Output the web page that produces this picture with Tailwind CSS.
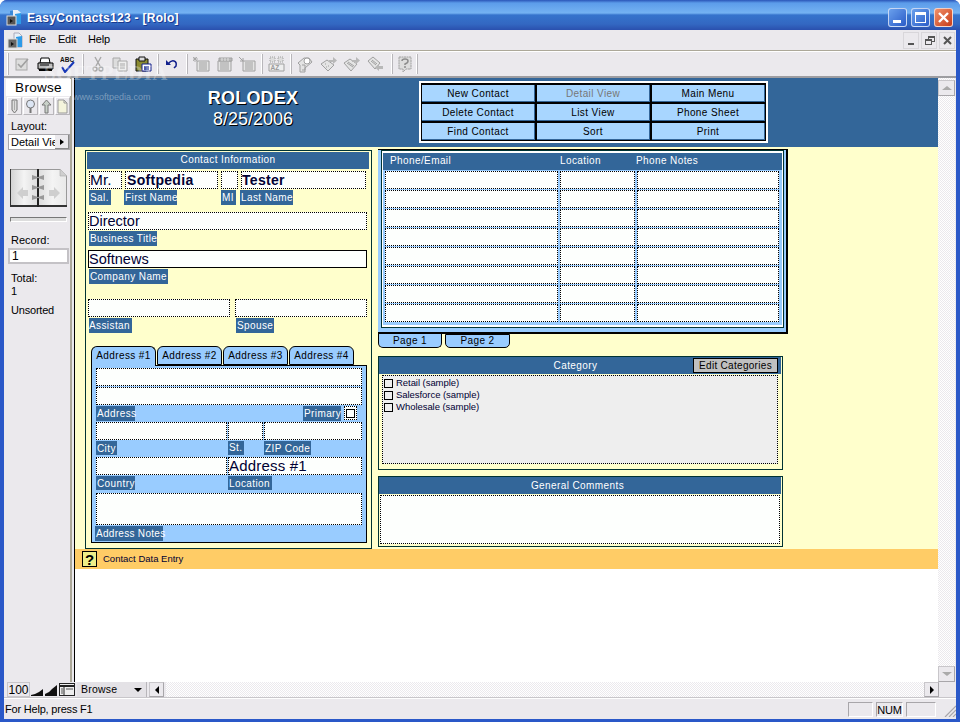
<!DOCTYPE html>
<html lang="en">
<head>
  <meta charset="UTF-8" />
  <title>EasyContacts123 - [Rolo]</title>
  <script src="https://cdn.jsdelivr.net/npm/@tailwindcss/browser@4"></script>
</head>
<body class="w-[960px] h-[722px] overflow-hidden bg-white font-['Liberation_Sans',Arial,sans-serif] text-black">

<div class="relative flex flex-col w-[960px] h-[722px] rounded-t-[7px] bg-[#2a58c8] overflow-hidden">

  <!-- Title bar -->
  <div class="flex items-center h-[30px] pt-[4px] pl-[6px] pr-[7px] bg-[linear-gradient(180deg,#2a55b8_0px,#5c9cea_3px,#74b2f2_13px,#3573cc_15px,#3368c2_24px,#2a50ae_30px)]">
    <svg class="w-[17px] h-[17px]" viewBox="0 0 17 17"><path d="M4 2l9-1v13l-9 1z" fill="#3a8ad8"/><path d="M7 1h5l3 3v11H7z" fill="#e8f0f8"/><path d="M9 5l6-1v11H9z" fill="#2c9ae8"/><rect x="1" y="7" width="9" height="9" fill="#555" stroke="#ddd"/><path d="M4 10l3 2-3 2z" fill="#111"/></svg>
    <span class="ml-[4px] mt-[1px] text-[12px] font-bold tracking-[0.3px] text-white [text-shadow:1px_1px_0_#1a3a90]">EasyContacts123 - [Rolo]</span>
    <div class="ml-auto flex gap-[4px]">
      <div class="relative w-[19px] h-[19px] rounded-[3px] border border-white/70 bg-[linear-gradient(135deg,#6aa0ec,#2a5cc8)]"><div class="absolute left-[4px] bottom-[3px] w-[8px] h-[3px] bg-white"></div></div>
      <div class="w-[19px] h-[19px] rounded-[3px] border border-white/70 bg-[linear-gradient(135deg,#6aa0ec,#2a5cc8)] p-[3px]"><div class="w-full h-full border border-t-[3px] border-white"></div></div>
      <div class="flex items-center justify-center w-[19px] h-[19px] rounded-[3px] border border-white/70 bg-[linear-gradient(135deg,#f0906a,#c83c18)]">
        <svg class="w-[13px] h-[13px]" viewBox="0 0 13 13"><path d="M2 2l9 9M11 2l-9 9" stroke="#fff" stroke-width="2.4"/></svg>
      </div>
    </div>
  </div>

  <!-- Client area -->
  <div class="flex flex-col mx-[4px] w-[952px] h-[689px] bg-[#ebe9ed]">

    <!-- Menu bar -->
    <div class="flex items-center h-[21px] pb-[2px] border-b border-[#aca899] text-[11px] tracking-[-0.2px]">
      <svg class="ml-[3px] mt-[2px] w-[17px] h-[17px]" viewBox="0 0 17 17"><path d="M7 1h5l3 3v11H7z" fill="#e8f0f8" stroke="#aab"/><path d="M9 5l6-1v11H9z" fill="#2c9ae8"/><rect x="1" y="7" width="9" height="9" fill="#666" stroke="#ddd"/><path d="M4 10l3 2-3 2z" fill="#111"/></svg>
      <span class="ml-[5px]">File</span>
      <span class="ml-[12px]">Edit</span>
      <span class="ml-[12px]">Help</span>
      <div class="ml-auto flex gap-[2px] mr-[1px] mt-[2px]">
        <div class="relative w-[16px] h-[17px] border border-[#d8d6da]"><div class="absolute left-[4px] bottom-[3px] w-[6px] h-[2px] bg-[#555]"></div></div>
        <div class="relative w-[16px] h-[17px] border border-[#d8d6da]"><div class="absolute left-[6px] top-[3px] w-[7px] h-[6px] border border-t-2 border-[#555]"></div><div class="absolute left-[3px] top-[6px] w-[7px] h-[6px] border border-t-2 border-[#555] bg-[#ebe9ed]"></div></div>
        <div class="flex items-center justify-center w-[16px] h-[17px] border border-[#d8d6da]"><svg class="w-[9px] h-[9px]" viewBox="0 0 9 9"><path d="M1 1l7 7M8 1l-7 7" stroke="#555" stroke-width="2"/></svg></div>
      </div>
    </div>

    <!-- Toolbar -->
    <div class="flex items-center h-[27px] border-t border-white border-b-2 border-b-[#9d9da1] pl-[3px]">
      <div class="w-[2px] h-[22px] border-l border-white bg-[#b8b6ba]"></div>
      <svg class="ml-[6px] w-[14px] h-[14px]" viewBox="0 0 14 14"><rect x="1" y="2" width="11" height="11" fill="#ddd" stroke="#a8a8a8"/><path d="M3 7l3 3 7-8" fill="none" stroke="#a0a0a0" stroke-width="1.6"/></svg>
      <svg class="ml-[8px] w-[17px] h-[15px]" viewBox="0 0 17 15"><path d="M4 1h8l1 5H3z" fill="#fff" stroke="#000"/><path d="M1 6h15v6H1z" fill="#bbb" stroke="#000"/><path d="M2 12h13v2H2z" fill="#000"/><path d="M3 8h9" stroke="#000"/></svg>
      <svg class="ml-[6px] w-[16px] h-[17px]" viewBox="0 0 16 17"><text x="0" y="6" font-size="6.500" font-weight="700" fill="#111">ABC</text><path d="M2 11l3 5 9-10" fill="none" stroke="#1838b8" stroke-width="2"/></svg>
      <div class="ml-[6px] w-[2px] h-[20px] border-l border-white bg-[#b8b6ba]"></div>
      <svg class="ml-[8px] w-[12px] h-[16px]" viewBox="0 0 12 16"><path d="M3 1l5 9M9 1L4 10" stroke="#a8a8a8" stroke-width="1.4"/><circle cx="3" cy="13" r="2" fill="none" stroke="#a8a8a8" stroke-width="1.4"/><circle cx="9" cy="13" r="2" fill="none" stroke="#a8a8a8" stroke-width="1.4"/></svg>
      <svg class="ml-[8px] w-[16px] h-[15px]" viewBox="0 0 16 15"><path d="M1 1h7v10H1z" fill="#ddd" stroke="#a8a8a8"/><path d="M6 4h9v10H6z" fill="#eee" stroke="#a8a8a8"/><path d="M8 7h5M8 9h5M8 11h5" stroke="#a8a8a8"/></svg>
      <svg class="ml-[7px] w-[17px] h-[16px]" viewBox="0 0 17 16"><path d="M1 3h12v12H1z" fill="#8a8a30" stroke="#111"/><path d="M4 1h6v4H4z" fill="#ddd" stroke="#111"/><path d="M7 8h9v7H7z" fill="#fff" stroke="#12208c"/><path d="M9 11h5M9 13h5" stroke="#12208c" stroke-width="1.400"/></svg>
      <div class="ml-[5px] w-[2px] h-[20px] border-l border-white bg-[#b8b6ba]"></div>
      <svg class="ml-[6px] w-[13px] h-[10px]" viewBox="0 0 13 10"><path d="M1 1v5h5z" fill="#12208c"/><path d="M3 5q3-4 6-3t2 5l-2 2" fill="none" stroke="#12208c" stroke-width="1.500"/></svg>
      <div class="ml-[8px] w-[2px] h-[20px] border-l border-white bg-[#b8b6ba]"></div>
      <svg class="ml-[5px] w-[17px] h-[15px]" viewBox="0 0 17 15"><path d="M4 4h12v10H4z" fill="#e4e4e4" stroke="#a0a0a0"/><path d="M6 6h8M6 8h8M6 10h8M6 12h8" stroke="#a0a0a0"/><path d="M2 0v5M0 2h5M0 0l4 4M4 0L0 4" stroke="#a0a0a0" stroke-width=".8"/></svg>
      <svg class="ml-[7px] w-[16px] h-[15px]" viewBox="0 0 16 15"><path d="M1 4h13v10H1z" fill="#e4e4e4" stroke="#a0a0a0"/><path d="M3 6h9M3 8h9M3 10h9M3 12h9" stroke="#a0a0a0"/><path d="M2 1h13v3H2z" fill="#bbb" stroke="#a0a0a0"/><path d="M5 1v3M8 1v3M11 1v3" stroke="#e4e4e4"/></svg>
      <svg class="ml-[5px] w-[18px] h-[15px]" viewBox="0 0 18 15"><path d="M5 4h12v10H5z" fill="#e4e4e4" stroke="#a0a0a0"/><path d="M7 6h8M7 8h8M7 10h8M7 12h8" stroke="#a0a0a0"/><path d="M1 0l4 4M5 1v3H2" fill="none" stroke="#a0a0a0"/></svg>
      <div class="ml-[5px] w-[2px] h-[20px] border-l border-white bg-[#b8b6ba]"></div>
      <svg class="ml-[5px] w-[17px] h-[16px]" viewBox="0 0 17 16"><path d="M2 1h5v5H2zM10 1h5v5h-5z" fill="#ddd" stroke="#a0a0a0" stroke-dasharray="1 1"/><path d="M1 8h15v7H1z" fill="#eee" stroke="#a0a0a0"/><text x="2.500" y="14" font-size="6.500" font-weight="700" fill="#999">AZ</text></svg>
      <div class="ml-[5px] w-[2px] h-[20px] border-l border-white bg-[#b8b6ba]"></div>
      <svg class="ml-[5px] w-[16px] h-[17px]" viewBox="0 0 16 17"><path d="M1 7l6-5h5l3 4-7 6v4H3V9z" fill="#e4e4e4" stroke="#a0a0a0"/><circle cx="10" cy="5" r="3" fill="#fff" stroke="#a0a0a0"/><path d="M5 9h3v5H5" fill="none" stroke="#a0a0a0"/></svg>
      <svg class="ml-[7px] w-[17px] h-[16px]" viewBox="0 0 17 16"><path d="M1 8l6-4 7 5-6 6z" fill="#e4e4e4" stroke="#a0a0a0"/><path d="M5 8h1M8 10h1M6 11h1" stroke="#a0a0a0"/><path d="M9 4h4V1l4 3.500L13 8V6H9z" fill="#b8b8b8"/></svg>
      <svg class="ml-[6px] w-[17px] h-[16px]" viewBox="0 0 17 16"><path d="M1 7l6-4 7 5-6 7z" fill="#e4e4e4" stroke="#a0a0a0"/><path d="M4 7l6 4M5 6l6 4" stroke="#a0a0a0"/><path d="M9 4h4V1l4 3.500L13 8V6H9z" fill="#b8b8b8"/></svg>
      <svg class="ml-[7px] w-[16px] h-[16px]" viewBox="0 0 16 16"><path d="M1 5l5-4 7 6-5 6z" fill="#e4e4e4" stroke="#a0a0a0"/><path d="M4 5l5 4M5 4l5 4" stroke="#a0a0a0"/><path d="M16 10h-4V8l-4 3.500 4 3.500v-2h4z" fill="#b8b8b8"/></svg>
      <div class="ml-[8px] w-[2px] h-[20px] border-l border-white bg-[#b8b6ba]"></div>
      <svg class="ml-[5px] w-[14px] h-[17px]" viewBox="0 0 14 17"><path d="M1 1h12v12H8l-3 3v-3H1z" fill="#ddd" stroke="#a0a0a0" stroke-dasharray="2 .5"/><path d="M4 5q0-2 3-2t3 2q0 2-3 3v1M7 10v2" fill="none" stroke="#8c8c8c" stroke-width="1.500"/></svg>
      <div class="ml-[4px] w-[2px] h-[20px] border-l border-white bg-[#b8b6ba]"></div>
    </div>

    <!-- Main area -->
    <div class="flex h-[604px]">

      <!-- Side panel -->
      <div class="flex w-[71px] border-r border-black">
        <div class="w-[68px] border-r-2 border-[#aca899] pl-[2px] text-[11px]">
          <div class="mt-[1px] w-[65px] h-[17px] bg-white text-center text-[13.500px] leading-[17px] tracking-[0.3px]">Browse</div>
          <div class="flex gap-[1px] mt-[1px] ml-[1px]">
            <div class="flex items-center justify-center w-[15px] h-[18px] border border-[#b8b6ba] border-t-white border-l-white"><svg class="w-[7px] h-[15px]" viewBox="0 0 7 15"><path d="M1 1h5v10L3.500 14 1 11z" fill="#ddd" stroke="#777"/><path d="M3.500 1v10" stroke="#aaa"/></svg></div>
            <div class="flex items-center justify-center w-[15px] h-[18px] border border-[#b8b6ba] border-t-white border-l-white"><svg class="w-[11px] h-[15px]" viewBox="0 0 11 15"><circle cx="5.500" cy="5" r="4" fill="#dde6f4" stroke="#777"/><path d="M5.500 9v5" stroke="#777" stroke-width="2"/></svg></div>
            <div class="flex items-center justify-center w-[15px] h-[18px] border border-[#b8b6ba] border-t-white border-l-white"><svg class="w-[11px] h-[15px]" viewBox="0 0 11 15"><path d="M5.500 1L10 6H7v8H4V6H1z" fill="#c8d0c8" stroke="#777"/></svg></div>
            <div class="flex items-center justify-center w-[15px] h-[18px] border border-[#b8b6ba] border-t-white border-l-white"><svg class="w-[11px] h-[15px]" viewBox="0 0 11 15"><path d="M1 1h6l3 3v10H1z" fill="#f4f4dc" stroke="#999"/><path d="M7 1v3h3" fill="none" stroke="#999"/></svg></div>
          </div>
          <div class="mt-[5px] ml-[5px] leading-[13px]">Layout:</div>
          <div class="flex items-center mt-[1px] ml-[2px] w-[62px] h-[16px] border border-[#a8a6aa] bg-white overflow-hidden">
            <span class="w-[46px] pl-[2px] whitespace-nowrap overflow-hidden">Detail Vie</span>
            <div class="flex items-center justify-center w-[14px] h-[14px] bg-[#ebe9ed] border-r border-b border-[#888]"><div class="border-y-[3px] border-y-transparent border-l-[4px] border-l-black"></div></div>
          </div>
          <svg class="block mt-[19px] ml-[4px] w-[57px] h-[38px]" viewBox="0 0 57 38">
            <defs>
              <linearGradient id="pageL" x1="0" x2="1" y1="0" y2="0"><stop offset="0" stop-color="#d0d0d0"/><stop offset="0.5" stop-color="#f4f4f4"/><stop offset="1" stop-color="#dcdcdc"/></linearGradient>
              <linearGradient id="pageR" x1="0" x2="1" y1="0" y2="0"><stop offset="0" stop-color="#dcdcdc"/><stop offset="0.5" stop-color="#f4f4f4"/><stop offset="1" stop-color="#e8e8e8"/></linearGradient>
            </defs>
            <path d="M0 0h28v38H0z" fill="url(#pageL)"/>
            <path d="M28 0h22l7 7v31H28z" fill="url(#pageR)"/>
            <path d="M0 .500h50" stroke="#999"/>
            <path d="M56.500 7v31" stroke="#999"/>
            <path d="M0 38V0h1v36h56v2z" fill="#333"/>
            <path d="M27 0h2v38h-2z" fill="#222"/>
            <path d="M50 0v7h7z" fill="#cfcfcf" stroke="#aaa" stroke-width=".6"/>
            <path d="M22 6l6 2 6-2v5l-6-2-6 2zM22 16l6 2 6-2v5l-6-2-6 2zM22 26l6 2 6-2v5l-6-2-6 2z" fill="#999"/>
            <path d="M7 24l6-6v3h5v6h-5v3z" fill="#cfcfcf"/>
            <path d="M50 24l-6-6v3h-5v6h5v3z" fill="#cfcfcf"/>
          </svg>
          <div class="mt-[10px] ml-[4px] w-[57px] h-[5px] border border-[#777] border-r-white border-b-white bg-[#ddd]"></div>
          <div class="mt-[12px] ml-[5px] leading-[13px]">Record:</div>
          <div class="mt-[1px] ml-[2px] w-[61px] h-[16px] pl-[2px] border-2 border-[#c4c2c6] bg-white text-[12px] leading-[12px]">1</div>
          <div class="mt-[8px] ml-[5px] leading-[13px]">Total:<br>1</div>
          <div class="mt-[5px] ml-[5px] leading-[14px] tracking-[-0.2px]">Unsorted</div>
        </div>
      </div>

      <!-- Layout content -->
      <div class="relative w-[863px] bg-white overflow-hidden">

        <!-- Header band -->
        <div class="flex h-[69px] bg-[#336699]">
          <div class="w-[344px] pl-[12px] pt-[10px] text-center text-white [text-shadow:1px_1px_0_#000]">
            <div class="text-[18px] leading-[21px] font-bold tracking-[0.2px]">ROLODEX</div>
            <div class="text-[18px] leading-[21px]">8/25/2006</div>
          </div>
          <div class="grid grid-cols-[113px_113px_113px] grid-rows-[17px_17px_17px] gap-[2px] self-start mt-[3px] w-[349px] h-[62px] border-2 border-white bg-black pt-[2px] pl-[1px] text-[10px] leading-[18px] tracking-[0.4px] text-center">
            <div class="bg-[#a8d6ff] border-b border-r border-[#336699]">New Contact</div>
            <div class="bg-[#a8d6ff] border-b border-r border-[#336699] text-[#777]">Detail View</div>
            <div class="bg-[#a8d6ff] border-b border-r border-[#336699]">Main Menu</div>
            <div class="bg-[#a8d6ff] border-b border-r border-[#336699]">Delete Contact</div>
            <div class="bg-[#a8d6ff] border-b border-r border-[#336699]">List View</div>
            <div class="bg-[#a8d6ff] border-b border-r border-[#336699]">Phone Sheet</div>
            <div class="bg-[#a8d6ff] border-b border-r border-[#336699]">Find Contact</div>
            <div class="bg-[#a8d6ff] border-b border-r border-[#336699]">Sort</div>
            <div class="bg-[#a8d6ff] border-b border-r border-[#336699]">Print</div>
          </div>
        </div>

        <!-- Form body -->
        <div class="flex h-[402px] pt-[3px] pl-[10px] bg-[#ffffcc] text-[10px] tracking-[0.4px]">

          <!-- Contact information -->
          <div class="w-[287px] h-[399px] border border-[#003333] p-[1px]">
            <div class="h-[17px] w-[282px] bg-[#336699] text-center text-white leading-[16px]">Contact Information</div>

            <div class="flex mt-[2px] ml-[2px] h-[18px] text-[#000033]">
              <div class="w-[33px] border border-dotted border-black bg-[#fdfffd] text-[15.500px] leading-[16px] tracking-normal">Mr.</div>
              <div class="ml-[3px] w-[93px] border border-dotted border-black bg-[#fdfffd] pl-[1px] text-[14px] leading-[16px] font-bold tracking-[0.3px]">Softpedia</div>
              <div class="ml-[3px] w-[17px] border border-dotted border-black bg-[#fdfffd]"></div>
              <div class="ml-[3px] w-[125px] border border-dotted border-black bg-[#fdfffd] text-[14px] leading-[16px] font-bold tracking-[0.3px]">Tester</div>
            </div>
            <div class="flex mt-[1px] ml-[2px] h-[15px] leading-[15px] text-white">
              <div class="w-[22px] bg-[#336699] pl-[1px]">Sal.</div>
              <div class="ml-[13px] w-[53px] bg-[#336699] pl-[1px] whitespace-nowrap overflow-hidden">First Name</div>
              <div class="ml-[44px] w-[15px] bg-[#336699] pl-[1px]">MI</div>
              <div class="ml-[4px] w-[53px] bg-[#336699] pl-[1px] whitespace-nowrap overflow-hidden">Last Name</div>
            </div>

            <div class="mt-[7px] ml-[1px] w-[279px] h-[18px] border border-dotted border-black bg-[#fdfffd] text-[14.500px] leading-[16px] tracking-normal text-[#000033]">Director</div>
            <div class="mt-[1px] ml-[2px] w-[68px] h-[15px] bg-[#336699] pl-[1px] leading-[15px] text-white whitespace-nowrap overflow-hidden">Business Title</div>

            <div class="mt-[4px] ml-[1px] w-[279px] h-[18px] border border-black bg-[#fdfffd] text-[14.500px] leading-[16px] tracking-normal text-[#000033]">Softnews</div>
            <div class="mt-[1px] ml-[2px] w-[79px] h-[15px] bg-[#336699] pl-[1px] leading-[15px] text-white whitespace-nowrap overflow-hidden">Company Name</div>

            <div class="flex mt-[15px] ml-[1px] h-[18px]">
              <div class="w-[142px] border border-dotted border-black bg-[#fdfffd]"></div>
              <div class="ml-[5px] w-[132px] border border-dotted border-black bg-[#fdfffd]"></div>
            </div>
            <div class="flex mt-[1px] ml-[2px] h-[15px] leading-[15px] text-white">
              <div class="w-[43px] bg-[#336699] whitespace-nowrap">Assistan</div>
              <div class="ml-[104px] w-[38px] bg-[#336699] pl-[1px]">Spouse</div>
            </div>

            <!-- Address tabs -->
            <div class="flex gap-[1px] mt-[13px] ml-[4px] h-[19px] leading-[18px] text-center">
              <div class="relative z-10 w-[65px] h-[20px] rounded-t-[6px] border border-b-0 border-black bg-[#99ccff]">Address #1</div>
              <div class="w-[65px] rounded-t-[6px] border border-black bg-[#99ccff]">Address #2</div>
              <div class="w-[65px] rounded-t-[6px] border border-black bg-[#99ccff]">Address #3</div>
              <div class="w-[65px] rounded-t-[6px] border border-black bg-[#99ccff]">Address #4</div>
            </div>
            <div class="ml-[4px] w-[276px] h-[178px] border border-black bg-[#99ccff] text-white">
              <div class="mt-[2px] ml-[4px] w-[266px] h-[18px] border border-dotted border-black bg-[#fdfffd]"></div>
              <div class="mt-[1px] ml-[4px] w-[266px] h-[18px] border border-dotted border-black bg-[#fdfffd]"></div>
              <div class="flex mt-[1px] ml-[4px] h-[15px] leading-[15px]">
                <div class="w-[39px] bg-[#336699] pl-[1px]">Address</div>
                <div class="ml-[168px] w-[38px] bg-[#336699] pl-[1px]">Primary</div>
                <div class="flex items-center justify-center ml-[3px] w-[13px] h-[14px] border border-dotted border-black bg-[#fdfffd]"><div class="w-[9px] h-[9px] border border-black"></div></div>
              </div>
              <div class="flex mt-[1px] ml-[4px] h-[18px]">
                <div class="w-[131px] border border-dotted border-black bg-[#fdfffd]"></div>
                <div class="ml-[1px] w-[35px] border border-dotted border-black bg-[#fdfffd]"></div>
                <div class="ml-[1px] w-[98px] border border-dotted border-black bg-[#fdfffd]"></div>
              </div>
              <div class="flex mt-[1px] ml-[4px] h-[14px] leading-[15px]">
                <div class="w-[21px] bg-[#336699] pl-[1px]">City</div>
                <div class="ml-[111px] w-[16px] bg-[#336699] pl-[1px] leading-[13px]">St.</div>
                <div class="ml-[20px] w-[47px] bg-[#336699] pl-[1px] whitespace-nowrap overflow-hidden">ZIP Code</div>
              </div>
              <div class="flex mt-[2px] ml-[4px] h-[18px]">
                <div class="w-[131px] border border-dotted border-black bg-[#fdfffd]"></div>
                <div class="ml-[1px] w-[134px] border border-dotted border-black bg-[#fdfffd] text-[15px] leading-[16px] tracking-[0.2px] text-[#000033]">Address #1</div>
              </div>
              <div class="flex mt-[1px] ml-[4px] h-[14px] leading-[15px]">
                <div class="w-[39px] bg-[#336699] pl-[1px]">Country</div>
                <div class="ml-[93px] w-[44px] bg-[#336699] pl-[1px]">Location</div>
              </div>
              <div class="mt-[3px] ml-[4px] w-[266px] h-[32px] border border-dotted border-black bg-[#fdfffd]"></div>
              <div class="mt-[1px] ml-[3px] w-[68px] h-[15px] bg-[#336699] pl-[1px] leading-[15px] tracking-[0.3px] whitespace-nowrap">Address Notes</div>
            </div>
          </div>

          <!-- Right column -->
          <div class="ml-[6px] mt-[-1px] w-[410px]">

            <!-- Phone / email grid -->
            <div class="w-[410px] h-[185px] border-t border-black border-r-2 border-b-2 bg-[#99ccff] pl-[3px]">
              <div class="w-[403px] h-[178px] border border-[#003333] bg-white pt-[2px] px-[1px]">
                <div class="h-[172px] bg-[#99ccff]">
                  <div class="relative h-[17px] bg-[#336699] text-white leading-[16px]">
                    <span class="absolute left-[7px]">Phone/Email</span>
                    <span class="absolute left-[177px]">Location</span>
                    <span class="absolute left-[253px]">Phone Notes</span>
                  </div>
                  <div id="phoneRows" class="mt-[1px] ml-[2px] grid grid-cols-[173px_75px_142px] gap-x-[2px] gap-y-[1px] auto-rows-[18px]"></div>
                </div>
              </div>
            </div>
            <div class="flex h-[14px] text-center">
              <div class="w-[64px] h-[14px] rounded-b-[5px] border border-t-0 border-black bg-[#99ccff] leading-[14px]">Page 1</div>
              <div class="ml-[3px] w-[65px] h-[14px] rounded-b-[5px] border border-black bg-[#99ccff] leading-[12px]">Page 2</div>
            </div>

            <!-- Category -->
            <div class="mt-[8px] w-[405px] h-[114px] border border-[#003333] pt-0">
              <div class="relative w-[402px] h-[17px] bg-[#336699] text-white text-center leading-[17px] pr-[9px]">Category
                <div class="absolute right-[3px] top-[1px] w-[85px] h-[15px] border border-black bg-[#c0c0c0] text-black leading-[14px] tracking-[0.3px]">Edit Categories</div>
              </div>
              <div class="mt-[1px] ml-[3px] w-[396px] h-[89px] border border-dotted border-black bg-[#eeeeee] pt-[1px] text-[9.500px] tracking-[-0.05px] text-[#000033]">
                <div class="flex items-center h-[12px]"><span class="ml-[1px] w-[9px] h-[9px] border border-black"></span><span class="ml-[3px]">Retail (sample)</span></div>
                <div class="flex items-center h-[12px]"><span class="ml-[1px] w-[9px] h-[9px] border border-black"></span><span class="ml-[3px]">Salesforce (sample)</span></div>
                <div class="flex items-center h-[12px]"><span class="ml-[1px] w-[9px] h-[9px] border border-black"></span><span class="ml-[3px]">Wholesale (sample)</span></div>
              </div>
            </div>

            <!-- General comments -->
            <div class="mt-[6px] w-[405px] h-[71px] border border-[#003333]">
              <div class="w-[402px] h-[17px] bg-[#336699] text-white text-center leading-[17px] pr-[5px]">General Comments</div>
              <div class="mt-[1px] ml-[1px] w-[400px] h-[49px] border border-dotted border-black bg-[#fdfffd]"></div>
            </div>
          </div>
        </div>

        <!-- Orange help strip -->
        <div class="flex items-center h-[20px] bg-[#ffcc66] pl-[7px] text-[9.500px] text-[#000033]">
          <div class="flex items-center justify-center w-[15px] h-[16px] border border-black bg-[#eeee88] text-[15px] leading-none font-bold text-black">?</div>
          <span class="ml-[6px] mt-[1px]">Contact Data Entry</span>
        </div>
      </div>

      <!-- Vertical scrollbar -->
      <div class="flex flex-col w-[17px] bg-[repeating-conic-gradient(#ffffff_0_25%,#ebe9ed_0_50%)] bg-[length:2px_2px]">
        <div class="flex items-center justify-center h-[16px] mt-[2px] border border-[#c8c6ca] border-r-[#a8a6aa] border-b-[#a8a6aa] bg-[#ebe9ed]"><div class="border-x-[5px] border-x-transparent border-b-[4px] border-b-[#aaa]"></div></div>
        <div class="flex-1"></div>
        <div class="flex items-center justify-center h-[16px] border border-[#c8c6ca] border-r-[#a8a6aa] border-b-[#a8a6aa] bg-[#ebe9ed]"><div class="border-x-[5px] border-x-transparent border-t-[4px] border-t-[#aaa]"></div></div>
      </div>
    </div>

    <!-- Bottom bar with zoom, mode and horizontal scroll -->
    <div class="flex items-center h-[16px] border-b border-[#c8c6ca] pl-[3px] text-[12px]">
      <div class="w-[23px] h-[15px] border border-[#c8c6ca] leading-[14px] text-center">100</div>
      <svg class="ml-[1px] w-[12px] h-[14px]" viewBox="0 0 12 14"><path d="M0 13h12V6l-4 3-4 2-4 1z" fill="#111"/></svg>
      <svg class="ml-[2px] w-[12px] h-[14px]" viewBox="0 0 12 14"><path d="M0 13h12V2L7 6 4 9l-4 2z" fill="#111"/></svg>
      <svg class="ml-[2px] w-[16px] h-[13px]" viewBox="0 0 16 13"><rect x=".5" y=".5" width="15" height="12" fill="#eee" stroke="#222"/><path d="M1 3h14" stroke="#222" stroke-width="2"/><path d="M5 3v9" stroke="#222"/><path d="M2 6h2M2 8h2M2 10h2M7 6h7" stroke="#555"/></svg>
      <div class="relative ml-[2px] w-[70px] h-[15px] border-r border-[#b8b6ba] bg-[#e4e2e6] pl-[4px] text-[10.500px] leading-[15px] tracking-[0.2px]">Browse
        <div class="absolute right-[4px] top-[6px] border-x-[4px] border-x-transparent border-t-[4px] border-t-black"></div>
      </div>
      <div class="flex items-center justify-center ml-[2px] w-[15px] h-[15px] border border-[#c8c6ca] border-r-[#a8a6aa] border-b-[#a8a6aa]"><div class="border-y-[4px] border-y-transparent border-r-[4px] border-r-black"></div></div>
      <div class="ml-[2px] w-[758px] h-[15px] bg-[repeating-conic-gradient(#ffffff_0_25%,#ebe9ed_0_50%)] bg-[length:2px_2px]"></div>
      <div class="flex items-center justify-center w-[15px] h-[15px] border border-[#c8c6ca] border-r-[#a8a6aa] border-b-[#a8a6aa]"><div class="border-y-[4px] border-y-transparent border-l-[4px] border-l-black"></div></div>
    </div>

    <!-- Status bar -->
    <div class="flex items-center h-[21px] pl-[1px] text-[11px] tracking-[-0.2px] border-t border-white">
      <span class="mt-[1px]">For Help, press F1</span>
      <div class="ml-auto flex items-center gap-[3px]">
        <div class="w-[25px] h-[15px] border border-[#a8a6aa] border-r-white border-b-white"></div>
        <div class="w-[27px] h-[15px] border border-[#a8a6aa] border-r-white border-b-white leading-[14px] text-center">NUM</div>
        <div class="w-[30px] h-[15px] border border-[#a8a6aa] border-r-white border-b-white"></div>
      </div>
      <svg class="ml-[8px] mb-[2px] w-[12px] h-[12px] self-end" viewBox="0 0 12 12"><path d="M1 12L12 1M5 12l7-7M9 12l3-3" stroke="#a8a6aa" stroke-width="1.2"/></svg>
    </div>
  </div>

  <!-- Softpedia watermark over toolbar and band -->
  <div class="absolute left-[44px] top-[61px] text-[21px] leading-[25px] font-bold tracking-[0.4px] text-white/30 font-['Liberation_Serif',serif]">SOFTPEDIA</div>
  <div class="absolute left-[73px] top-[91px] text-[9px] leading-[12px] text-white/35">www.softpedia.com</div>
</div>

<script>
  const phoneRows = document.getElementById('phoneRows');
  let cells = '';
  for (let i = 0; i < 24; i++) {
    cells += '<div class="border border-dotted border-black bg-[#fdfffd]"></div>';
  }
  phoneRows.innerHTML = cells;
</script>
</body>
</html>
